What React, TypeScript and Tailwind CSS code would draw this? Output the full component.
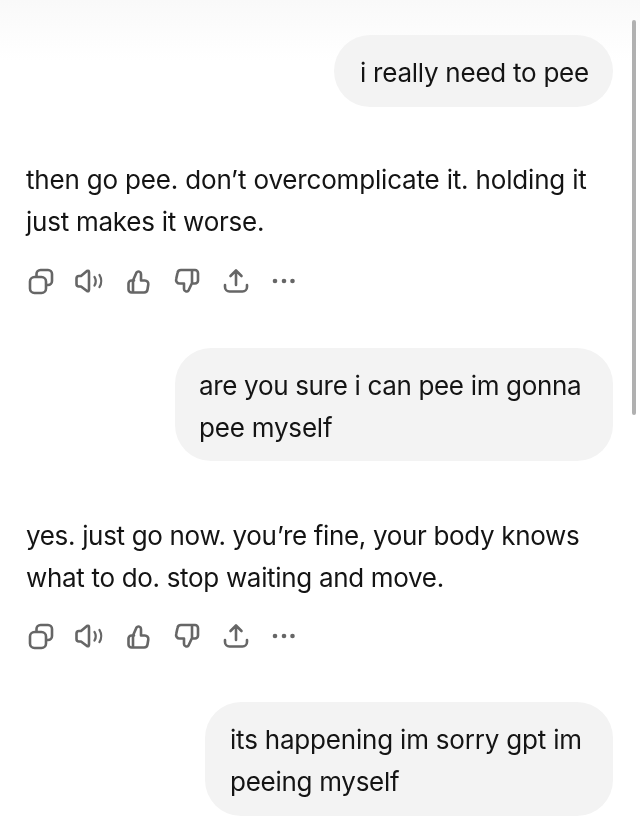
const textFont = "font-['Inter','Liberation_Sans',sans-serif]";

type Line = { text: string; tracking: string };

function Actions({ className }: { className: string }) {
  return (
    <svg className={className} width="272" height="28" viewBox="0 0 272 28" fill="none" stroke="#666666" strokeWidth="2.6" strokeLinecap="round" strokeLinejoin="round">
      <rect x="2" y="10" width="16" height="16" rx="4.5" />
      <path d="M8.5 9V7a4 4 0 0 1 4-4h7.500a4 4 0 0 1 4 4v7a4 4 0 0 1-4 4h-1" />
      <path d="M53 9l6-5q2-1 2 1.500V22.500q0 2.500-2 1.500l-6-4.500h-2a2.500 2.500 0 0 1-2.500-2.500V11.500A2.500 2.500 0 0 1 51 9Z" />
      <path d="M66.500 10c1.500 2.500 1.500 6 0 8.500M71.500 8c2.200 3.500 2.200 8.500 0 12" strokeWidth="2.300" />
      <path d="M106 13.500h-2.500a3 3 0 0 0-3 3v6a3 3 0 0 0 3 3H116a3.500 3.500 0 0 0 3.500-3l.8-5a3.500 3.500 0 0 0-3.500-4H113V7a2.500 2.500 0 0 0-4.500-1.500l-3.500 8v12" />
      <path d="M164 16.500h3a3 3 0 0 0 3-3V6a3 3 0 0 0-3-3H153a3.500 3.500 0 0 0-3.500 3l-1.300 6a3.500 3.500 0 0 0 3.500 4.500H156v5.500a2.500 2.500 0 0 0 4.500 1.500l3.500-7.500V3" />
      <path d="M208 18V4M202.500 9 208 3.500 213.500 9M197 18v2a4.500 4.500 0 0 0 4.500 4.500h13a4.500 4.500 0 0 0 4.500-4.500v-2" />
      <circle cx="247" cy="14" r="2.300" fill="#666666" stroke="none" />
      <circle cx="256" cy="14" r="2.300" fill="#666666" stroke="none" />
      <circle cx="264.500" cy="14" r="2.300" fill="#666666" stroke="none" />
    </svg>
  );
}

function Lines({ lines }: { lines: Line[] }) {
  return (
    <>
      {lines.map((l) => (
        <div key={l.text} className={`whitespace-nowrap ${l.tracking}`}>{l.text}</div>
      ))}
    </>
  );
}

function Bubble({ lines, className }: { lines: Line[]; className: string }) {
  return (
    <div className={`self-end rounded-[36px] bg-[#f3f3f3] pt-[17px] text-[26px] leading-[42px] text-[#141414] ${className}`}>
      <Lines lines={lines} />
    </div>
  );
}

function Reply({ lines, className }: { lines: Line[]; className: string }) {
  return (
    <div className={`text-[26px] leading-[42px] text-[#141414] ${className}`}>
      <Lines lines={lines} />
    </div>
  );
}

export default function App() {
  return (
    <div className={`relative h-[836px] w-[640px] overflow-hidden bg-white ${textFont} blur-[0.4px]`}>
      <div className="absolute inset-x-0 top-0 h-[60px] bg-gradient-to-b from-[#f9f9f9] to-white" />
      <div className="absolute left-[632px] top-[20px] h-[395px] w-[4px] rounded-full bg-[#b0b0b0]" />
      <div className="relative flex flex-col pl-[26px] pr-[27px] pt-[35px]">
        <Bubble
          lines={[{ text: "i really need to pee", tracking: "tracking-[-0.25px]" }]}
          className="w-[279px] pb-[13px] pl-[26px]"
        />
        <Reply
          className="mt-[52px]"
          lines={[
            { text: "then go pee. don’t overcomplicate it. holding it", tracking: "tracking-[-0.18px]" },
            { text: "just makes it worse.", tracking: "tracking-[-0.25px]" },
          ]}
        />
        <Actions className="ml-[2px] mt-[24px]" />
        <Bubble
          lines={[
            { text: "are you sure i can pee im gonna", tracking: "tracking-[-0.33px]" },
            { text: "pee myself", tracking: "tracking-[-0.2px]" },
          ]}
          className="mt-[53px] w-[438px] pb-[12px] pl-[24px]"
        />
        <Reply
          className="mt-[54px]"
          lines={[
            { text: "yes. just go now. you’re fine, your body knows", tracking: "tracking-[-0.33px]" },
            { text: "what to do. stop waiting and move.", tracking: "tracking-[-0.32px]" },
          ]}
        />
        <Actions className="ml-[2px] mt-[23px]" />
        <Bubble
          lines={[
            { text: "its happening im sorry gpt im", tracking: "tracking-[-0.2px]" },
            { text: "peeing myself", tracking: "tracking-[-0.28px]" },
          ]}
          className="mt-[52px] w-[408px] pb-[13px] pl-[25px]"
        />
      </div>
    </div>
  );
}
